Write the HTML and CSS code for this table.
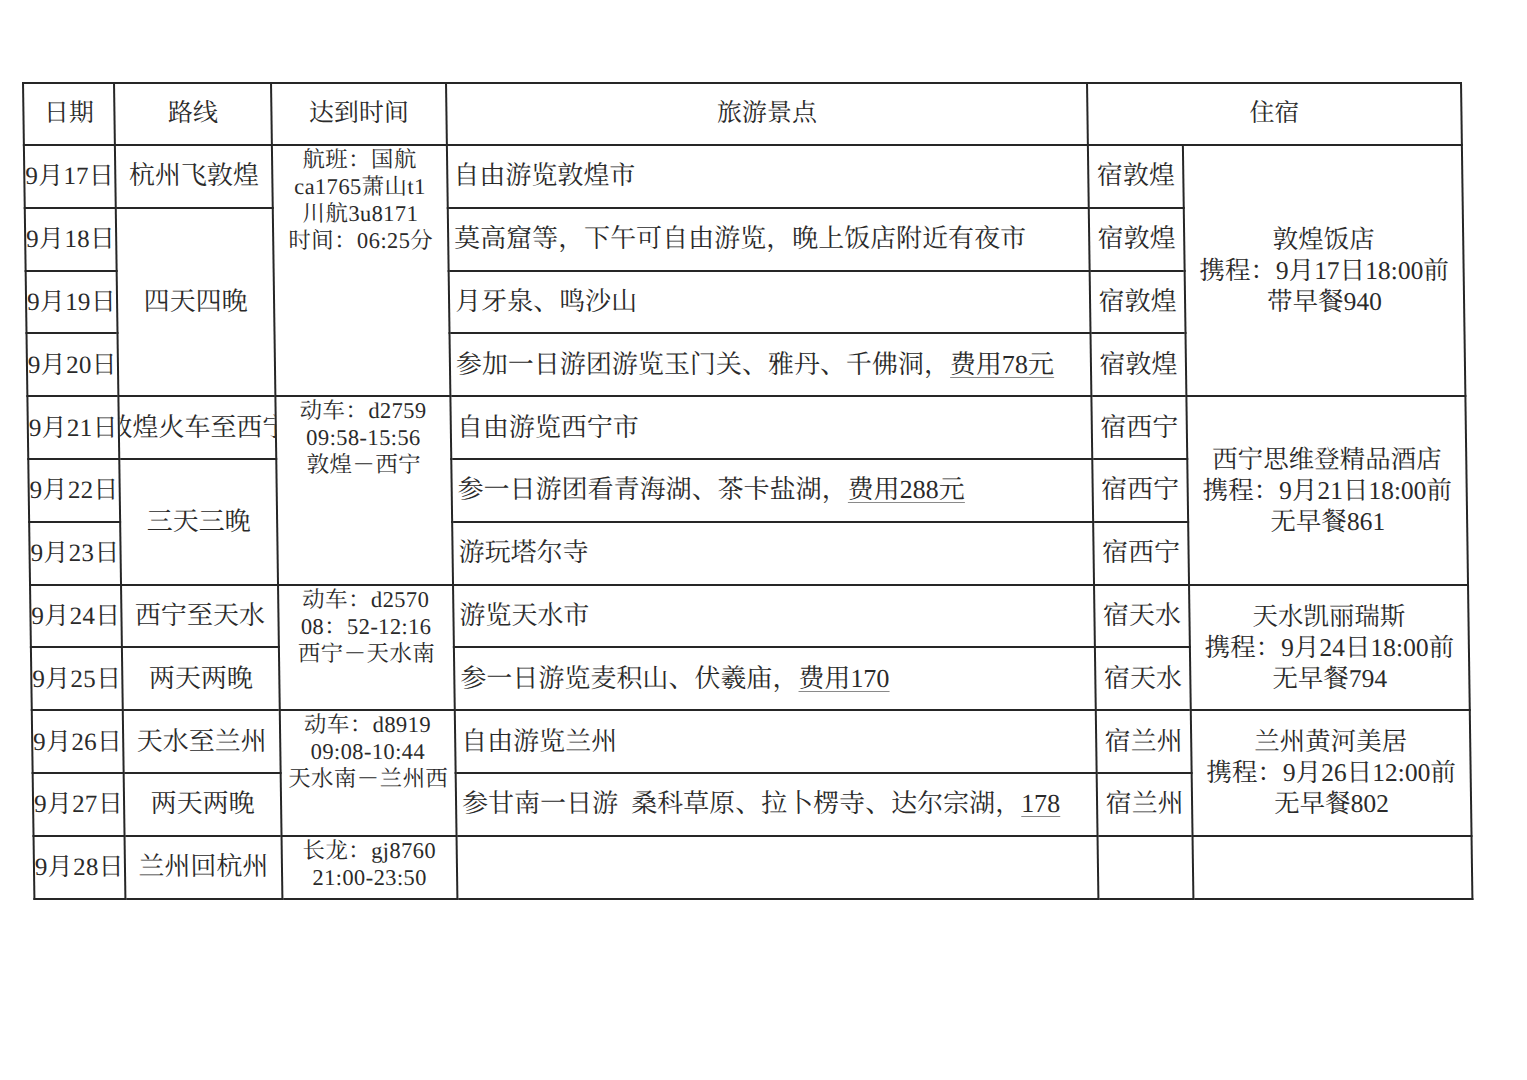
FILE: index.html
```html
<!DOCTYPE html>
<html lang="zh-CN">
<head>
<meta charset="utf-8">
<title>行程表</title>
<link rel="stylesheet" href="styles.css">
</head>
<body>
<div class="page">
<table class="trip">
  <colgroup>
    <col class="c-date"><col class="c-route"><col class="c-time"><col class="c-spot"><col class="c-stay"><col class="c-hotel">
  </colgroup>
  <thead>
    <tr class="head">
      <th>日期</th><th>路线</th><th>达到时间</th><th>旅游景点</th><th colspan="2">住宿</th>
    </tr>
  </thead>
  <tbody>
    <tr>
      <td class="date">9月17日</td>
      <td class="route">杭州飞敦煌</td>
      <td class="time" rowspan="4">航班：国航<br>ca1765萧山t1<br>川航3u8171<br>时间：06:25分</td>
      <td class="spot">自由游览敦煌市</td>
      <td class="stay">宿敦煌</td>
      <td class="hotel" rowspan="4">敦煌饭店<br>携程：9月17日18:00前<br>带早餐940</td>
    </tr>
    <tr>
      <td class="date">9月18日</td>
      <td class="route" rowspan="3">四天四晚</td>
      <td class="spot">莫高窟等，下午可自由游览，晚上饭店附近有夜市</td>
      <td class="stay">宿敦煌</td>
    </tr>
    <tr>
      <td class="date">9月19日</td>
      <td class="spot">月牙泉、鸣沙山</td>
      <td class="stay">宿敦煌</td>
    </tr>
    <tr>
      <td class="date">9月20日</td>
      <td class="spot">参加一日游团游览玉门关、雅丹、千佛洞，<span class="fee">费用78元</span></td>
      <td class="stay">宿敦煌</td>
    </tr>
    <tr>
      <td class="date">9月21日</td>
      <td class="route"><div class="clip"><span>敦煌火车至西宁</span></div></td>
      <td class="time" rowspan="3">动车：d2759<br>09:58-15:56<br>敦煌－西宁</td>
      <td class="spot">自由游览西宁市</td>
      <td class="stay">宿西宁</td>
      <td class="hotel" rowspan="3">西宁思维登精品酒店<br>携程：9月21日18:00前<br>无早餐861</td>
    </tr>
    <tr>
      <td class="date">9月22日</td>
      <td class="route" rowspan="2">三天三晚</td>
      <td class="spot">参一日游团看青海湖、茶卡盐湖，<span class="fee">费用288元</span></td>
      <td class="stay">宿西宁</td>
    </tr>
    <tr>
      <td class="date">9月23日</td>
      <td class="spot">游玩塔尔寺</td>
      <td class="stay">宿西宁</td>
    </tr>
    <tr>
      <td class="date">9月24日</td>
      <td class="route">西宁至天水</td>
      <td class="time" rowspan="2">动车：d2570<br>08：52-12:16<br>西宁－天水南</td>
      <td class="spot">游览天水市</td>
      <td class="stay">宿天水</td>
      <td class="hotel" rowspan="2">天水凯丽瑞斯<br>携程：9月24日18:00前<br>无早餐794</td>
    </tr>
    <tr>
      <td class="date">9月25日</td>
      <td class="route">两天两晚</td>
      <td class="spot">参一日游览麦积山、伏羲庙，<span class="fee">费用170</span></td>
      <td class="stay">宿天水</td>
    </tr>
    <tr>
      <td class="date">9月26日</td>
      <td class="route">天水至兰州</td>
      <td class="time" rowspan="2">动车：d8919<br>09:08-10:44<br>天水南－兰州西</td>
      <td class="spot">自由游览兰州</td>
      <td class="stay">宿兰州</td>
      <td class="hotel" rowspan="2">兰州黄河美居<br>携程：9月26日12:00前<br>无早餐802</td>
    </tr>
    <tr>
      <td class="date">9月27日</td>
      <td class="route">两天两晚</td>
      <td class="spot">参甘南一日游&nbsp;&nbsp;桑科草原、拉卜楞寺、达尔宗湖，<span class="fee">178</span></td>
      <td class="stay">宿兰州</td>
    </tr>
    <tr>
      <td class="date">9月28日</td>
      <td class="route">兰州回杭州</td>
      <td class="time">长龙：gj8760<br>21:00-23:50</td>
      <td class="spot"></td>
      <td class="stay"></td>
      <td class="hotel"></td>
    </tr>
  </tbody>
</table>
</div>
</body>
</html>
```
FILE: styles.css
```css
html, body {
  margin: 0;
  padding: 0;
  background: #ffffff;
}

body {
  width: 1527px;
  height: 1080px;
  overflow: hidden;
  font-family: "Liberation Serif", "Noto Serif CJK SC", "Noto Sans CJK SC", serif;
  color: #2a2a2a;
}

.page {
  padding: 82px 0 0 22px;
}

.trip {
  border-collapse: collapse;
  table-layout: fixed;
  width: 1438px;
  transform: skewX(0.8deg);
  transform-origin: top left;
}

.c-date { width: 91px; }
.c-route { width: 157px; }
.c-time { width: 175px; }
.c-spot { width: 641px; }
.c-stay { width: 95px; }
.c-hotel { width: 279px; }

.trip th,
.trip td {
  border: 2px solid #262626;
  padding: 0;
  white-space: nowrap;
}

.trip th {
  height: 58px;
  font-weight: normal;
  font-size: 25px;
  line-height: 30px;
  text-align: center;
  vertical-align: middle;
  padding-bottom: 2px;
}

.trip tbody td {
  height: 60.8px;
  vertical-align: middle;
  line-height: 30px;
}

.date {
  font-size: 25px;
  text-align: center;
  overflow: hidden;
  letter-spacing: 0.3px;
}

.route {
  font-size: 26px;
  text-align: center;
  overflow: hidden;
}

.clip {
  display: flex;
  justify-content: center;
  overflow: hidden;
  width: 100%;
}

.clip span {
  flex: none;
}

.trip tbody td.time {
  vertical-align: top;
  text-align: center;
  font-size: 22.5px;
  line-height: 27px;
  padding-top: 0;
  letter-spacing: 0.4px;
}

.trip tbody td.spot {
  font-size: 26px;
  text-align: left;
  padding-left: 5px;
}

.fee {
  text-decoration: underline;
  text-decoration-color: #8a8a8a;
  text-decoration-thickness: 1px;
  text-underline-offset: 4px;
}

.stay {
  font-size: 26px;
  text-align: center;
}

.trip tbody td.hotel {
  font-size: 25.5px;
  line-height: 31px;
  text-align: center;
}
```
